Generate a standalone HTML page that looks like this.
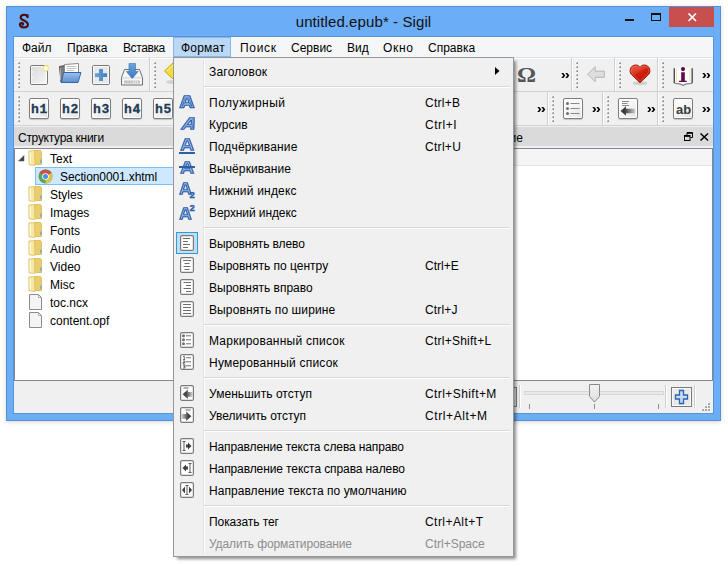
<!DOCTYPE html>
<html><head><meta charset="utf-8">
<style>
*{box-sizing:border-box;margin:0;padding:0}
html,body{width:728px;height:566px;overflow:hidden;background:#fff;font-family:"Liberation Sans",sans-serif;font-size:12px;color:#000}
.a{position:absolute}
svg{position:absolute;overflow:visible}
#win{left:6px;top:6px;width:715px;height:415px;background:#6badf6;border:1px solid #5590d6;box-shadow:0 1px 5px rgba(0,0,0,0.16)}
#title{left:0;width:727px;text-align:center;font-size:15px;line-height:15px;top:14px;color:#111;letter-spacing:0.1px}
#client{left:14px;top:37px;width:699px;height:376px;background:#f0f0f0}
#menubar{left:14px;top:37px;width:699px;height:21px;background:#f5f6f7;border-top:1px solid #fbfbfb;border-bottom:1px solid #e0e0e0}
.mi{top:38px;height:20px;line-height:20px;font-size:12px}
#fmt{left:173px;top:37px;width:58px;height:20px;background:#bcd8f7;border:1px solid #84b8ec}
.dot{width:2px;height:2px;background:linear-gradient(135deg,#cdcdcd 40%,#8a8a8a 60%);box-shadow:-1px -1px 0 rgba(255,255,255,0.6)}
.vs{width:2px;border-left:1px solid #cdcdcd;border-right:1px solid #fff}
.hl{height:1px;background:#d2d2d2}
.doc{border:1px solid #7d7d7d;border-radius:2px;background:linear-gradient(135deg,#fff 0%,#f4f4f4 50%,#e4e4e4 100%);box-shadow:inset 0 0 0 1px #fff,0 1px 1px rgba(0,0,0,0.18)}
.hb{font-family:"Liberation Mono",monospace;font-weight:bold;font-size:13px;color:#1f3b55;text-align:left;line-height:18px;letter-spacing:0.6px;padding-left:2px;-webkit-text-stroke:0.3px #1f3b55}
.chev{font-weight:bold;font-size:13px;line-height:13px;letter-spacing:-1px}
.dhdr{background:#dadada;border-top:1px solid #c9c9c9;border-bottom:1px solid #c9c9c9}
.tr{left:50px;font-size:12px;line-height:14px}
.fold{width:13px;height:15px}
#menu{left:173px;top:57px;width:341px;height:500px;background:#f0f0f0;border:1px solid #979797;box-shadow:3px 3px 3px -1px rgba(0,0,0,0.45)}
#gutter{left:203px;top:60px;width:1px;height:494px;background:#e2e2e2;border-right:1px solid #fff;width:2px}
.it{left:209px;font-size:12px;line-height:14px;height:14px}
.sc{left:425px;font-size:12px;line-height:14px;height:14px}
.sep{left:204px;width:306px;height:2px;border-top:1px solid #d7d7d7;border-bottom:1px solid #fff}
.dis{color:#8d8d8d}
</style></head><body>
<div id="win" class="a"></div>
<!-- Sigil logo -->
<svg style="left:19px;top:13px" width="11" height="16"><path d="M8.6 4.2 C8.4 2.3 7 1.7 5.2 1.7 C2.9 1.7 1.7 3 1.7 4.4 C1.7 6.5 4.4 7.2 6.1 8.1 C7.8 9 8.9 9.9 8.9 11.5 C8.9 13.4 7 14.4 4.8 14.4 C2.4 14.4 0.9 13.2 0.9 11.7 C0.9 10.3 2.1 9.8 3.2 10 C4.2 10.2 4.5 11.3 3.5 11.7" fill="none" stroke="#4e0b0d" stroke-width="2.1" stroke-linecap="round"/><path d="M7 1.8 L9.7 1.2 L9.1 5 Z" fill="#4e0b0d"/></svg>
<div id="title" class="a">untitled.epub* - Sigil</div>
<!-- window buttons -->
<div class="a" style="left:625px;top:19px;width:9px;height:2px;background:#111"></div>
<div class="a" style="left:651px;top:13px;width:10px;height:8px;border:1px solid #111;border-top-width:2px"></div>
<div class="a" style="left:669px;top:7px;width:45px;height:20px;background:#c7504f"></div>
<svg style="left:669px;top:7px" width="45" height="20"><path d="M19.5 6.5 L27 14 M27 6.5 L19.5 14" stroke="#fff" stroke-width="1.7"/></svg>

<div class="a" style="left:13px;top:36px;width:701px;height:378px;border:1px solid #5a93d6"></div>
<div id="client" class="a"></div>
<div id="menubar" class="a"></div>
<div id="fmt" class="a"></div>
<div class="a mi" style="left:22px">Файл</div>
<div class="a mi" style="left:67px">Правка</div>
<div class="a mi" style="left:123px;letter-spacing:-0.4px">Вставка</div>
<div class="a mi" style="left:181px;letter-spacing:0.2px">Формат</div>
<div class="a mi" style="left:240px;letter-spacing:0.7px">Поиск</div>
<div class="a mi" style="left:291px">Сервис</div>
<div class="a mi" style="left:347px">Вид</div>
<div class="a mi" style="left:383px;letter-spacing:0.7px">Окно</div>
<div class="a mi" style="left:428px">Справка</div>

<!-- toolbars -->
<div class="a" style="left:14px;top:58px;width:699px;height:68px;background:#f0f0f0;border-top:1px solid #fff"></div>
<div class="a hl" style="left:14px;top:91px;width:699px"></div>
<div class="a hl" style="left:14px;top:125px;width:699px"></div>

<!-- grips row1 -->
<div class="a" id="g1"></div>
<div class="a dot" style="left:18px;top:62px"></div><div class="a dot" style="left:18px;top:66px"></div><div class="a dot" style="left:18px;top:70px"></div><div class="a dot" style="left:18px;top:74px"></div><div class="a dot" style="left:18px;top:78px"></div><div class="a dot" style="left:18px;top:82px"></div><div class="a dot" style="left:18px;top:86px"></div>
<div class="a dot" style="left:154px;top:62px"></div><div class="a dot" style="left:154px;top:66px"></div><div class="a dot" style="left:154px;top:70px"></div><div class="a dot" style="left:154px;top:74px"></div><div class="a dot" style="left:154px;top:78px"></div><div class="a dot" style="left:154px;top:82px"></div><div class="a dot" style="left:154px;top:86px"></div>
<div class="a dot" style="left:576px;top:62px"></div><div class="a dot" style="left:576px;top:66px"></div><div class="a dot" style="left:576px;top:70px"></div><div class="a dot" style="left:576px;top:74px"></div><div class="a dot" style="left:576px;top:78px"></div><div class="a dot" style="left:576px;top:82px"></div><div class="a dot" style="left:576px;top:86px"></div>
<div class="a dot" style="left:619px;top:62px"></div><div class="a dot" style="left:619px;top:66px"></div><div class="a dot" style="left:619px;top:70px"></div><div class="a dot" style="left:619px;top:74px"></div><div class="a dot" style="left:619px;top:78px"></div><div class="a dot" style="left:619px;top:82px"></div><div class="a dot" style="left:619px;top:86px"></div>
<div class="a dot" style="left:662px;top:62px"></div><div class="a dot" style="left:662px;top:66px"></div><div class="a dot" style="left:662px;top:70px"></div><div class="a dot" style="left:662px;top:74px"></div><div class="a dot" style="left:662px;top:78px"></div><div class="a dot" style="left:662px;top:82px"></div><div class="a dot" style="left:662px;top:86px"></div>
<div class="a dot" style="left:18px;top:96px"></div><div class="a dot" style="left:18px;top:100px"></div><div class="a dot" style="left:18px;top:104px"></div><div class="a dot" style="left:18px;top:108px"></div><div class="a dot" style="left:18px;top:112px"></div><div class="a dot" style="left:18px;top:116px"></div><div class="a dot" style="left:18px;top:120px"></div>
<div class="a dot" style="left:552px;top:96px"></div><div class="a dot" style="left:552px;top:100px"></div><div class="a dot" style="left:552px;top:104px"></div><div class="a dot" style="left:552px;top:108px"></div><div class="a dot" style="left:552px;top:112px"></div><div class="a dot" style="left:552px;top:116px"></div><div class="a dot" style="left:552px;top:120px"></div>
<div class="a dot" style="left:607px;top:96px"></div><div class="a dot" style="left:607px;top:100px"></div><div class="a dot" style="left:607px;top:104px"></div><div class="a dot" style="left:607px;top:108px"></div><div class="a dot" style="left:607px;top:112px"></div><div class="a dot" style="left:607px;top:116px"></div><div class="a dot" style="left:607px;top:120px"></div>
<div class="a dot" style="left:662px;top:96px"></div><div class="a dot" style="left:662px;top:100px"></div><div class="a dot" style="left:662px;top:104px"></div><div class="a dot" style="left:662px;top:108px"></div><div class="a dot" style="left:662px;top:112px"></div><div class="a dot" style="left:662px;top:116px"></div><div class="a dot" style="left:662px;top:120px"></div>
<div class="a vs" style="left:149px;top:58px;height:33px"></div>
<div class="a vs" style="left:571px;top:58px;height:33px"></div>
<div class="a vs" style="left:614px;top:58px;height:33px"></div>
<div class="a vs" style="left:657px;top:58px;height:33px"></div>
<div class="a vs" style="left:547px;top:92px;height:33px"></div>
<div class="a vs" style="left:602px;top:92px;height:33px"></div>
<div class="a vs" style="left:657px;top:92px;height:33px"></div>
<svg style="left:30px;top:65px" width="19" height="20">
<defs><linearGradient id="gdoc" x1="0" y1="0" x2="1" y2="1"><stop offset="0" stop-color="#d9d9d9"/><stop offset="1" stop-color="#f7f7f7"/></linearGradient></defs>
<rect x="0.5" y="0.5" width="17" height="19" rx="1.5" fill="url(#gdoc)" stroke="#7a7a7a"/>
<rect x="1.5" y="1.5" width="15" height="17" fill="none" stroke="#fff" stroke-opacity="0.7"/>
<circle cx="3" cy="7" r="0.8" fill="#fff"/><circle cx="3" cy="12" r="0.8" fill="#fff"/>
<circle cx="15.8" cy="3.2" r="2.6" fill="#fff" stroke="#f2e46a" stroke-width="1.4" stroke-opacity="0.85"/>
</svg>
<svg style="left:59px;top:63px" width="23" height="21">
<defs><linearGradient id="gfo" x1="0" y1="0" x2="0" y2="1"><stop offset="0" stop-color="#9cc0ea"/><stop offset="1" stop-color="#5b8fd2"/></linearGradient></defs>
<path d="M0.5 3.5 L6 2.5 L6 19 L2 19.5 Z" fill="#7a7a7a" stroke="#505050" stroke-width="1"/>
<path d="M1.5 5 L1.5 17" stroke="#a8a8a8" stroke-width="1"/>
<path d="M5.5 1.5 L19.5 0.5 L19.5 10 L5.5 10 Z" fill="#fdfdfd" stroke="#8c8c8c" stroke-width="1"/>
<path d="M7.5 3.5 H17.5 M7.5 5.5 H17.5 M7.5 7.5 H15" stroke="#b4b4b4" stroke-width="0.8"/>
<path d="M4.5 9.5 L22 9.5 L19 19.5 L2.5 19.5 Z" fill="url(#gfo)" stroke="#3567ad" stroke-width="1" stroke-linejoin="round"/>
</svg>
<svg style="left:92px;top:65px" width="19" height="20">
<rect x="0.5" y="0.5" width="17" height="19" rx="1.5" fill="#e6e8ea" stroke="#7a7a7a"/>
<rect x="1.5" y="1.5" width="15" height="17" fill="none" stroke="#f6f6f6"/>
<defs><linearGradient id="gad" x1="0" x2="1"><stop offset="0" stop-color="#6aa3d8"/><stop offset="1" stop-color="#3f80c0"/></linearGradient></defs><path d="M7 4 H11 V8.2 H15 V12 H11 V16 H7 V12 H3 V8.2 H7 Z" fill="url(#gad)"/>
</svg>
<svg style="left:121px;top:63px" width="23" height="23">
<defs><linearGradient id="gsv" x1="0" y1="0" x2="0" y2="1"><stop offset="0" stop-color="#6aa6e0"/><stop offset="1" stop-color="#3b78c2"/></linearGradient></defs>
<path d="M3.5 6.5 H18.5 L21.5 14.5 V22 H0.5 V14.5 Z" fill="#f6f6f6" stroke="#707070" stroke-width="1" stroke-linejoin="round"/>
<path d="M1 14.8 H21" stroke="#d0d0d0" stroke-width="1"/>
<rect x="3" y="17.5" width="16" height="3" fill="#c4c4c4"/>
<path d="M12.5 17.5 V20.5 M14.5 17.5 V20.5 M16.5 17.5 V20.5" stroke="#ececec" stroke-width="0.8"/>
<path d="M8 0.5 H14.5 V8.5 H17.2 L11.25 15.5 L5.3 8.5 H8 Z" fill="url(#gsv)" stroke="#3a70b0" stroke-width="0.6"/>
</svg>
<svg style="left:164px;top:63px" width="16" height="18">
<ellipse cx="9" cy="19" rx="7" ry="2" fill="#000" opacity="0.12"/>
<path d="M0.5 8 L9 0 L17 8 L9 16 Z" fill="#f4dc3a" stroke="#c9a800" stroke-width="1"/>
<path d="M3 8 L9 2.5 L15 8" fill="none" stroke="#fbef9a" stroke-width="1"/>
</svg>
<div class="a" style="left:517px;top:65px;font-family:'Liberation Serif',serif;font-weight:bold;font-size:22px;line-height:20px;color:#555;transform:scaleX(1.08);transform-origin:0 0">&#937;</div>
<svg style="left:561px;top:73px" width="9" height="6"><path d="M0.3 0 H2.3 L4.3 2.5 L2.3 5 H0.3 L2.3 2.5 Z M4.3 0 H6.3 L8.3 2.5 L6.3 5 H4.3 L6.3 2.5 Z" fill="#000"/></svg>
<svg style="left:702px;top:73px" width="9" height="6"><path d="M0.3 0 H2.3 L4.3 2.5 L2.3 5 H0.3 L2.3 2.5 Z M4.3 0 H6.3 L8.3 2.5 L6.3 5 H4.3 L6.3 2.5 Z" fill="#000"/></svg>
<svg style="left:537px;top:107px" width="9" height="6"><path d="M0.3 0 H2.3 L4.3 2.5 L2.3 5 H0.3 L2.3 2.5 Z M4.3 0 H6.3 L8.3 2.5 L6.3 5 H4.3 L6.3 2.5 Z" fill="#000"/></svg>
<svg style="left:592px;top:107px" width="9" height="6"><path d="M0.3 0 H2.3 L4.3 2.5 L2.3 5 H0.3 L2.3 2.5 Z M4.3 0 H6.3 L8.3 2.5 L6.3 5 H4.3 L6.3 2.5 Z" fill="#000"/></svg>
<svg style="left:647px;top:107px" width="9" height="6"><path d="M0.3 0 H2.3 L4.3 2.5 L2.3 5 H0.3 L2.3 2.5 Z M4.3 0 H6.3 L8.3 2.5 L6.3 5 H4.3 L6.3 2.5 Z" fill="#000"/></svg>
<svg style="left:702px;top:107px" width="9" height="6"><path d="M0.3 0 H2.3 L4.3 2.5 L2.3 5 H0.3 L2.3 2.5 Z M4.3 0 H6.3 L8.3 2.5 L6.3 5 H4.3 L6.3 2.5 Z" fill="#000"/></svg>
<svg style="left:587px;top:66px" width="18" height="17">
<path d="M0.7 8.2 L8.2 0.7 V5.2 H17.3 V11.3 H8.2 V15.8 Z" fill="#dedede" stroke="#b5b5b5" stroke-width="1"/>
</svg>
<svg style="left:629px;top:64px" width="22" height="22">
<defs><linearGradient id="ght" x1="0" y1="0" x2="0.6" y2="1"><stop offset="0" stop-color="#e8654c"/><stop offset="0.45" stop-color="#dc3a22"/><stop offset="0.55" stop-color="#cf1e0c"/><stop offset="1" stop-color="#c41a0a"/></linearGradient></defs>
<ellipse cx="11" cy="19.2" rx="7.5" ry="2" fill="#000" opacity="0.14"/>
<path d="M11 18.8 L2.2 10.2 C1 9 0.9 6.8 1.4 5 C2.2 2.4 4.3 1 6.8 1 C8.8 1 10.2 2 11 3.4 C11.8 2 13.2 1 15.2 1 C17.7 1 19.8 2.4 20.6 5 C21.1 6.8 21 9 19.8 10.2 Z" fill="url(#ght)" stroke="#a8140a" stroke-width="1"/>
<path d="M11 17.3 L3 9.6 C2.2 8.6 2.1 6.9 2.5 5.4 C3.2 3.3 4.8 2.1 6.9 2.1 C8.6 2.1 10 3.1 11 4.8 C12 3.1 13.4 2.1 15.1 2.1 C17.2 2.1 18.8 3.3 19.5 5.4 C19.9 6.9 19.8 8.6 19 9.6 Z" fill="none" stroke="#f08a70" stroke-width="0.6" opacity="0.7"/>
</svg>
<svg style="left:673px;top:66px" width="21" height="21">
<path d="M1.5 2 L10 1.2 L19 2 V17 C15 17 12 17.5 10 19.3 C8 17.5 5 17 1.5 17 Z" fill="#fbfaf3"/>
<path d="M1.3 2.2 V17.2 M19.2 2.2 V17.2" stroke="#4d4d4d" stroke-width="1.4"/>
<path d="M1.5 17.3 C5 17.3 8 17.8 10 19.5 C12 17.8 15 17.3 19 17.3" fill="none" stroke="#8a8a8a" stroke-width="1.2"/>
<path d="M3.5 3 V16 M17 3 V16" stroke="#e6e2d0" stroke-width="1"/>
<circle cx="10" cy="3.1" r="2.1" fill="#5e0a4f"/>
<path d="M8.2 6.2 H11.8 V14.7 H13.8 V16.1 H6 V14.7 H8.2 Z" fill="#5e0a4f"/>
</svg>
<div class="a doc" style="left:29px;top:98px;width:20px;height:21px"></div>
<div class="a hb" style="left:29px;top:101px;width:20px;height:18px">h1</div>
<div class="a doc" style="left:60px;top:98px;width:20px;height:21px"></div>
<div class="a hb" style="left:60px;top:101px;width:20px;height:18px">h2</div>
<div class="a doc" style="left:91px;top:98px;width:20px;height:21px"></div>
<div class="a hb" style="left:91px;top:101px;width:20px;height:18px">h3</div>
<div class="a doc" style="left:122px;top:98px;width:20px;height:21px"></div>
<div class="a hb" style="left:122px;top:101px;width:20px;height:18px">h4</div>
<div class="a doc" style="left:153px;top:98px;width:20px;height:21px"></div>
<div class="a hb" style="left:153px;top:101px;width:20px;height:18px">h5</div>
<div class="a doc" style="left:563px;top:98px;width:20px;height:21px"></div>
<svg style="left:563px;top:98px" width="20" height="21">
<circle cx="4.5" cy="5.5" r="1.5" fill="#707070"/><circle cx="4.5" cy="10.5" r="1.5" fill="#707070"/><circle cx="4.5" cy="15.5" r="1.5" fill="#707070"/>
<path d="M7.5 5.5 H16.5 M7.5 10.5 H16.5 M7.5 15.5 H16.5" stroke="#8a8a8a" stroke-width="1"/>
</svg>
<div class="a doc" style="left:618px;top:98px;width:20px;height:21px"></div>
<svg style="left:618px;top:98px" width="20" height="21">
<defs><linearGradient id="gar" x1="0" x2="1"><stop offset="0.3" stop-color="#3c3c3c"/><stop offset="1" stop-color="#3c3c3c" stop-opacity="0.2"/></linearGradient></defs>
<path d="M4 3.5 H11 M4 5.5 H9.5 M4 7.5 H11" stroke="#8a8a8a" stroke-width="1"/>
<path d="M2.5 13 L8 8.2 V10.8 H17 V15.2 H8 V17.8 Z" fill="url(#gar)"/>
</svg>
<div class="a doc" style="left:673px;top:98px;width:20px;height:21px"></div>
<div class="a" style="left:673px;top:99px;width:20px;height:21px;font-weight:bold;font-size:13px;line-height:21px;text-align:center;color:#3a3a3a;padding-left:1px">ab</div>

<!-- dock left -->
<div class="a" style="left:14px;top:127px;width:260px;height:19px;background:#dadada"></div>
<div class="a" style="left:18px;top:131px;font-size:12px;line-height:14px;letter-spacing:-0.27px">Структура книги</div>
<div class="a" style="left:14px;top:148px;width:260px;height:233px;background:#fff;border:1px solid #828790;border-width:1px 0 1px 1px"></div>
<svg style="left:18px;top:155px" width="7" height="7"><path d="M6 0.5 L6 6 L0.5 6 Z" fill="#3c3c3c" stroke="#6a6a6a" stroke-width="0.6"/></svg>
<div class="a" style="left:35px;top:167px;width:240px;height:18px;background:#cde8ff;border:1px solid #7fbef5"></div>
<svg style="left:28px;top:150px" width="15" height="16">
<path d="M6 0.5 L12.5 0.5 L13.5 2 L13.5 14.5 L6 14.5 Z" fill="#e9cd6e" stroke="#d9b94f" stroke-width="0.8"/>
<path d="M0.8 1 L6.5 0.5 L7 15.5 L1 14.8 Z" fill="#f8e7a2" stroke="#dcc063" stroke-width="0.8"/>
<path d="M2.3 2.5 L2.5 13.5" stroke="#fffbe6" stroke-width="1.2"/>
<path d="M13 9.5 V13" stroke="#5a9fe0" stroke-width="1.2"/>
</svg>
<div class="a tr" style="top:152px">Text</div>
<svg style="left:38px;top:169px" width="15" height="15">
<circle cx="7.5" cy="7.5" r="7" fill="#5aa55c"/>
<path d="M7.5 7.5 L1.44 4 A7 7 0 0 1 13.56 4 Z" fill="#c9514e"/>
<path d="M7.5 7.5 L13.56 4 A7 7 0 0 1 7.5 14.5 Z" fill="#d9c54a"/>
<circle cx="7.5" cy="7.5" r="3.3" fill="#fff"/>
<circle cx="7.5" cy="7.5" r="2.5" fill="#4d8fe0"/>
</svg>
<div class="a tr" style="left:60px;top:170px;letter-spacing:-0.1px">Section0001.xhtml</div>
<svg style="left:28px;top:186px" width="15" height="16">
<path d="M6 0.5 L12.5 0.5 L13.5 2 L13.5 14.5 L6 14.5 Z" fill="#e9cd6e" stroke="#d9b94f" stroke-width="0.8"/>
<path d="M0.8 1 L6.5 0.5 L7 15.5 L1 14.8 Z" fill="#f8e7a2" stroke="#dcc063" stroke-width="0.8"/>
<path d="M2.3 2.5 L2.5 13.5" stroke="#fffbe6" stroke-width="1.2"/>
<path d="M13 9.5 V13" stroke="#5a9fe0" stroke-width="1.2"/>
</svg>
<div class="a tr" style="top:188px">Styles</div>
<svg style="left:28px;top:204px" width="15" height="16">
<path d="M6 0.5 L12.5 0.5 L13.5 2 L13.5 14.5 L6 14.5 Z" fill="#e9cd6e" stroke="#d9b94f" stroke-width="0.8"/>
<path d="M0.8 1 L6.5 0.5 L7 15.5 L1 14.8 Z" fill="#f8e7a2" stroke="#dcc063" stroke-width="0.8"/>
<path d="M2.3 2.5 L2.5 13.5" stroke="#fffbe6" stroke-width="1.2"/>
<path d="M13 9.5 V13" stroke="#5a9fe0" stroke-width="1.2"/>
</svg>
<div class="a tr" style="top:206px">Images</div>
<svg style="left:28px;top:222px" width="15" height="16">
<path d="M6 0.5 L12.5 0.5 L13.5 2 L13.5 14.5 L6 14.5 Z" fill="#e9cd6e" stroke="#d9b94f" stroke-width="0.8"/>
<path d="M0.8 1 L6.5 0.5 L7 15.5 L1 14.8 Z" fill="#f8e7a2" stroke="#dcc063" stroke-width="0.8"/>
<path d="M2.3 2.5 L2.5 13.5" stroke="#fffbe6" stroke-width="1.2"/>
<path d="M13 9.5 V13" stroke="#5a9fe0" stroke-width="1.2"/>
</svg>
<div class="a tr" style="top:224px">Fonts</div>
<svg style="left:28px;top:240px" width="15" height="16">
<path d="M6 0.5 L12.5 0.5 L13.5 2 L13.5 14.5 L6 14.5 Z" fill="#e9cd6e" stroke="#d9b94f" stroke-width="0.8"/>
<path d="M0.8 1 L6.5 0.5 L7 15.5 L1 14.8 Z" fill="#f8e7a2" stroke="#dcc063" stroke-width="0.8"/>
<path d="M2.3 2.5 L2.5 13.5" stroke="#fffbe6" stroke-width="1.2"/>
<path d="M13 9.5 V13" stroke="#5a9fe0" stroke-width="1.2"/>
</svg>
<div class="a tr" style="top:242px">Audio</div>
<svg style="left:28px;top:258px" width="15" height="16">
<path d="M6 0.5 L12.5 0.5 L13.5 2 L13.5 14.5 L6 14.5 Z" fill="#e9cd6e" stroke="#d9b94f" stroke-width="0.8"/>
<path d="M0.8 1 L6.5 0.5 L7 15.5 L1 14.8 Z" fill="#f8e7a2" stroke="#dcc063" stroke-width="0.8"/>
<path d="M2.3 2.5 L2.5 13.5" stroke="#fffbe6" stroke-width="1.2"/>
<path d="M13 9.5 V13" stroke="#5a9fe0" stroke-width="1.2"/>
</svg>
<div class="a tr" style="top:260px">Video</div>
<svg style="left:28px;top:276px" width="15" height="16">
<path d="M6 0.5 L12.5 0.5 L13.5 2 L13.5 14.5 L6 14.5 Z" fill="#e9cd6e" stroke="#d9b94f" stroke-width="0.8"/>
<path d="M0.8 1 L6.5 0.5 L7 15.5 L1 14.8 Z" fill="#f8e7a2" stroke="#dcc063" stroke-width="0.8"/>
<path d="M2.3 2.5 L2.5 13.5" stroke="#fffbe6" stroke-width="1.2"/>
<path d="M13 9.5 V13" stroke="#5a9fe0" stroke-width="1.2"/>
</svg>
<div class="a tr" style="top:278px">Misc</div>
<svg style="left:29px;top:294px" width="14" height="16">
<path d="M0.5 0.5 H9.5 L12.5 3.5 V15.5 H0.5 Z" fill="#f4f4f4" stroke="#8c8c8c" stroke-width="1"/>
<path d="M9.5 0.5 V3.5 H12.5" fill="none" stroke="#b0b0b0" stroke-width="1"/>
</svg>
<div class="a tr" style="top:296px">toc.ncx</div>
<svg style="left:29px;top:312px" width="14" height="16">
<path d="M0.5 0.5 H9.5 L12.5 3.5 V15.5 H0.5 Z" fill="#f4f4f4" stroke="#8c8c8c" stroke-width="1"/>
<path d="M9.5 0.5 V3.5 H12.5" fill="none" stroke="#b0b0b0" stroke-width="1"/>
</svg>
<div class="a tr" style="top:314px">content.opf</div>
<div class="a" style="left:290px;top:127px;width:423px;height:19px;background:#dadada"></div>
<div class="a" style="left:323px;width:200px;text-align:right;top:131px;font-size:12px;line-height:14px">Оглавление</div>
<svg style="left:684px;top:132px" width="9" height="9">
<path d="M3 0.5 H8.5 V5.5 H6.5 M3 0.5 V3" fill="none" stroke="#000" stroke-width="1"/>
<path d="M3 1.2 H8" stroke="#000" stroke-width="1.3"/>
<rect x="0.5" y="3.5" width="5.5" height="5" fill="none" stroke="#000" stroke-width="1"/>
<path d="M0.5 4.2 H6" stroke="#000" stroke-width="1.3"/>
</svg>
<svg style="left:700px;top:133px" width="9" height="8"><path d="M0.5 0.5 L8 7.5 M8 0.5 L0.5 7.5" stroke="#000" stroke-width="1.5"/></svg>
<div class="a" style="left:290px;top:148px;width:423px;height:233px;background:#fff;border:1px solid #828790;border-width:1px 1px 1px 1px"></div>
<div class="a" style="left:291px;top:149px;width:421px;height:17px;background:#f5f5f5;border-bottom:1px solid #e3e3e3"></div>
<div class="a" style="left:505px;top:387px;width:12px;height:20px;border:1px solid #7a7a7a;background:#e6e6e6"></div>
<div class="a vs" style="left:519px;top:385px;height:23px"></div>
<div class="a" style="left:524px;top:391px;width:140px;height:4px;background:#e7eaea;border:1px solid #d6d6d6"></div>
<div class="a" style="left:529px;top:404px;width:1px;height:5px;background:#8a8a8a"></div>
<div class="a" style="left:594px;top:404px;width:1px;height:5px;background:#8a8a8a"></div>
<div class="a" style="left:658px;top:404px;width:1px;height:5px;background:#8a8a8a"></div>
<svg style="left:589px;top:384px" width="11" height="19">
<defs><linearGradient id="gsl" x1="0" x2="0" y1="0" y2="1"><stop offset="0" stop-color="#f4f4f4"/><stop offset="1" stop-color="#dcdcdc"/></linearGradient></defs>
<path d="M0.5 0.5 H10.5 V12.5 L5.5 18 L0.5 12.5 Z" fill="url(#gsl)" stroke="#8a8a8a" stroke-width="1"/>
</svg>
<div class="a vs" style="left:665px;top:385px;height:23px"></div>
<div class="a" style="left:671px;top:387px;width:21px;height:20px;border:1px solid #7a7a7a;background:#e9e9e9;box-shadow:inset 0 0 0 1px #f8f8f8"></div>
<svg style="left:674px;top:389px" width="15" height="16">
<path d="M5.5 1.5 H9.5 V6 H13.5 V10 H9.5 V14.5 H5.5 V10 H1.5 V6 H5.5 Z" fill="#c5dcf4" stroke="#2f62b0" stroke-width="1.3"/>
</svg>
<div class="a vs" style="left:694px;top:385px;height:23px"></div>
<div class="a dot" style="left:708px;top:403px;background:#a8a8a8"></div>
<div class="a dot" style="left:705px;top:406px;background:#a8a8a8"></div>
<div class="a dot" style="left:708px;top:406px;background:#a8a8a8"></div>
<div class="a dot" style="left:702px;top:409px;background:#a8a8a8"></div>
<div class="a dot" style="left:705px;top:409px;background:#a8a8a8"></div>
<div class="a dot" style="left:708px;top:409px;background:#a8a8a8"></div>

<!-- menu -->
<div id="menu" class="a"></div>
<div id="gutter" class="a"></div>
<div class="a it" style="top:65px;letter-spacing:0.2px">Заголовок</div>
<svg style="left:495px;top:67px" width="5" height="8"><path d="M0 0 L4.5 4 L0 8Z" fill="#000"/></svg>
<div class="a sep" style="top:86px"></div>
<div class="a it" style="top:96px;letter-spacing:0.5px">Полужирный</div><div class="a sc" style="top:96px;letter-spacing:0.25px">Ctrl+B</div>
<div class="a it" style="top:118px">Курсив</div><div class="a sc" style="top:118px;letter-spacing:0.5px">Ctrl+I</div>
<div class="a it" style="top:140px;letter-spacing:0.15px">Подчёркивание</div><div class="a sc" style="top:140px;letter-spacing:0.3px">Ctrl+U</div>
<div class="a it" style="top:162px;letter-spacing:0.08px">Вычёркивание</div>
<div class="a it" style="top:184px;letter-spacing:0.2px">Нижний индекс</div>
<div class="a it" style="top:206px;letter-spacing:-0.1px">Верхний индекс</div>
<div class="a sep" style="top:227px"></div>
<div class="a it" style="top:237px;letter-spacing:-0.1px">Выровнять влево</div>
<div class="a it" style="top:259px">Выровнять по центру</div><div class="a sc" style="top:259px">Ctrl+E</div>
<div class="a it" style="top:281px">Выровнять вправо</div>
<div class="a it" style="top:303px;letter-spacing:0.12px">Выровнять по ширине</div><div class="a sc" style="top:303px;letter-spacing:0.15px">Ctrl+J</div>
<div class="a sep" style="top:324px"></div>
<div class="a it" style="top:334px;letter-spacing:0.24px">Маркированный список</div><div class="a sc" style="top:334px;letter-spacing:0.25px">Ctrl+Shift+L</div>
<div class="a it" style="top:356px;letter-spacing:0.22px">Нумерованный список</div>
<div class="a sep" style="top:377px"></div>
<div class="a it" style="top:387px;letter-spacing:0.06px">Уменьшить отступ</div><div class="a sc" style="top:387px;letter-spacing:0.42px">Ctrl+Shift+M</div>
<div class="a it" style="top:409px">Увеличить отступ</div><div class="a sc" style="top:409px;letter-spacing:0.6px">Ctrl+Alt+M</div>
<div class="a sep" style="top:430px"></div>
<div class="a it" style="top:440px;letter-spacing:-0.13px">Направление текста слева направо</div>
<div class="a it" style="top:462px;letter-spacing:-0.1px">Направление текста справа налево</div>
<div class="a it" style="top:484px;letter-spacing:0.05px">Направление текста по умолчанию</div>
<div class="a sep" style="top:505px"></div>
<div class="a it" style="top:515px;letter-spacing:-0.07px">Показать тег</div><div class="a sc" style="top:515px;letter-spacing:0.45px">Ctrl+Alt+T</div>
<div class="a it dis" style="top:537px;letter-spacing:-0.12px">Удалить форматирование</div><div class="a sc dis" style="top:537px">Ctrl+Space</div>
<svg style="left:179px;top:95px" width="18" height="18">
<defs><clipPath id="ca95"><path d="M0.5 13 L5 0.5 H11 L15.5 13 H11 L10.2 10.5 H5.8 L5 13 Z M6.6 7.5 H9.4 L8.6 4 H7.4 Z" fill-rule="evenodd" clip-rule="evenodd"/></clipPath>
<linearGradient id="ga95" x1="0" y1="0" x2="0" y2="1"><stop offset="0" stop-color="#5b90d8"/><stop offset="1" stop-color="#3166b8"/></linearGradient></defs>
<path d="M0.5 13 L5 0.5 H11 L15.5 13 H11 L10.2 10.5 H5.8 L5 13 Z M6.6 7.5 H9.4 L8.6 4 H7.4 Z" fill="url(#ga95)" fill-rule="evenodd" stroke="#2a56a0" stroke-width="0.6" stroke-linejoin="round"/>
<g clip-path="url(#ca95)"><path d="M0.5 13 L5 0.5 H11 L15.5 13 H11 L10.2 10.5 H5.8 L5 13 Z M6.6 7.5 H9.4 L8.6 4 H7.4 Z" fill="none" stroke="#9fc0ec" stroke-width="2.8" stroke-linejoin="round"/><path d="M0.5 13 L5 0.5 H11 L15.5 13 H11 L10.2 10.5 H5.8 L5 13 Z M6.6 7.5 H9.4 L8.6 4 H7.4 Z" fill="none" stroke="#2a56a0" stroke-width="1.7" stroke-linejoin="round"/></g>
</svg>
<svg style="left:180px;top:117px" width="18" height="18">
<defs><clipPath id="ca117"><path d="M0.5 12.5 L9.5 0.5 H14.5 L14 12.5 H10.5 L10.7 10 H6 L4 12.5 Z M7.8 7.5 H10.9 L11.2 3.5 Z" fill-rule="evenodd" clip-rule="evenodd"/></clipPath>
<linearGradient id="ga117" x1="0" y1="0" x2="0" y2="1"><stop offset="0" stop-color="#5b90d8"/><stop offset="1" stop-color="#3166b8"/></linearGradient></defs>
<path d="M0.5 12.5 L9.5 0.5 H14.5 L14 12.5 H10.5 L10.7 10 H6 L4 12.5 Z M7.8 7.5 H10.9 L11.2 3.5 Z" fill="url(#ga117)" fill-rule="evenodd" stroke="#2a56a0" stroke-width="0.6" stroke-linejoin="round"/>
<g clip-path="url(#ca117)"><path d="M0.5 12.5 L9.5 0.5 H14.5 L14 12.5 H10.5 L10.7 10 H6 L4 12.5 Z M7.8 7.5 H10.9 L11.2 3.5 Z" fill="none" stroke="#9fc0ec" stroke-width="2.8" stroke-linejoin="round"/><path d="M0.5 12.5 L9.5 0.5 H14.5 L14 12.5 H10.5 L10.7 10 H6 L4 12.5 Z M7.8 7.5 H10.9 L11.2 3.5 Z" fill="none" stroke="#2a56a0" stroke-width="1.7" stroke-linejoin="round"/></g>
</svg>
<svg style="left:180px;top:138px" width="18" height="18">
<defs><clipPath id="ca138"><path d="M0.5 12.5 L5 0.5 H9.5 L14 12.5 H10.8 L10 10 H4.5 L3.7 12.5 Z M5.3 7.5 H9.2 L7.6 3 H6.9 Z" fill-rule="evenodd" clip-rule="evenodd"/></clipPath>
<linearGradient id="ga138" x1="0" y1="0" x2="0" y2="1"><stop offset="0" stop-color="#5b90d8"/><stop offset="1" stop-color="#3166b8"/></linearGradient></defs>
<path d="M0.5 12.5 L5 0.5 H9.5 L14 12.5 H10.8 L10 10 H4.5 L3.7 12.5 Z M5.3 7.5 H9.2 L7.6 3 H6.9 Z" fill="url(#ga138)" fill-rule="evenodd" stroke="#2a56a0" stroke-width="0.6" stroke-linejoin="round"/>
<g clip-path="url(#ca138)"><path d="M0.5 12.5 L5 0.5 H9.5 L14 12.5 H10.8 L10 10 H4.5 L3.7 12.5 Z M5.3 7.5 H9.2 L7.6 3 H6.9 Z" fill="none" stroke="#9fc0ec" stroke-width="2.8" stroke-linejoin="round"/><path d="M0.5 12.5 L5 0.5 H9.5 L14 12.5 H10.8 L10 10 H4.5 L3.7 12.5 Z M5.3 7.5 H9.2 L7.6 3 H6.9 Z" fill="none" stroke="#2a56a0" stroke-width="1.7" stroke-linejoin="round"/></g>
<rect x="-1" y="14" width="16" height="2" fill="#2f5ea8"/></svg>
<svg style="left:180px;top:161px" width="18" height="18">
<defs><clipPath id="ca161"><path d="M0.5 12.5 L5 0.5 H9.5 L14 12.5 H10.8 L10 10 H4.5 L3.7 12.5 Z M5.3 7.5 H9.2 L7.6 3 H6.9 Z" fill-rule="evenodd" clip-rule="evenodd"/></clipPath>
<linearGradient id="ga161" x1="0" y1="0" x2="0" y2="1"><stop offset="0" stop-color="#5b90d8"/><stop offset="1" stop-color="#3166b8"/></linearGradient></defs>
<path d="M0.5 12.5 L5 0.5 H9.5 L14 12.5 H10.8 L10 10 H4.5 L3.7 12.5 Z M5.3 7.5 H9.2 L7.6 3 H6.9 Z" fill="url(#ga161)" fill-rule="evenodd" stroke="#2a56a0" stroke-width="0.6" stroke-linejoin="round"/>
<g clip-path="url(#ca161)"><path d="M0.5 12.5 L5 0.5 H9.5 L14 12.5 H10.8 L10 10 H4.5 L3.7 12.5 Z M5.3 7.5 H9.2 L7.6 3 H6.9 Z" fill="none" stroke="#9fc0ec" stroke-width="2.8" stroke-linejoin="round"/><path d="M0.5 12.5 L5 0.5 H9.5 L14 12.5 H10.8 L10 10 H4.5 L3.7 12.5 Z M5.3 7.5 H9.2 L7.6 3 H6.9 Z" fill="none" stroke="#2a56a0" stroke-width="1.7" stroke-linejoin="round"/></g>
<rect x="-1" y="5" width="16" height="2" fill="#2f5ea8"/></svg>
<svg style="left:179px;top:182px" width="18" height="18">
<defs><clipPath id="ca182"><path d="M0.5 12.5 L4.5 0.5 H8.5 L12.5 12.5 H9.6 L8.9 10 H4.1 L3.4 12.5 Z M4.8 7.5 H8.2 L6.8 3 H6.2 Z" fill-rule="evenodd" clip-rule="evenodd"/></clipPath>
<linearGradient id="ga182" x1="0" y1="0" x2="0" y2="1"><stop offset="0" stop-color="#5b90d8"/><stop offset="1" stop-color="#3166b8"/></linearGradient></defs>
<path d="M0.5 12.5 L4.5 0.5 H8.5 L12.5 12.5 H9.6 L8.9 10 H4.1 L3.4 12.5 Z M4.8 7.5 H8.2 L6.8 3 H6.2 Z" fill="url(#ga182)" fill-rule="evenodd" stroke="#2a56a0" stroke-width="0.6" stroke-linejoin="round"/>
<g clip-path="url(#ca182)"><path d="M0.5 12.5 L4.5 0.5 H8.5 L12.5 12.5 H9.6 L8.9 10 H4.1 L3.4 12.5 Z M4.8 7.5 H8.2 L6.8 3 H6.2 Z" fill="none" stroke="#9fc0ec" stroke-width="2.8" stroke-linejoin="round"/><path d="M0.5 12.5 L4.5 0.5 H8.5 L12.5 12.5 H9.6 L8.9 10 H4.1 L3.4 12.5 Z M4.8 7.5 H8.2 L6.8 3 H6.2 Z" fill="none" stroke="#2a56a0" stroke-width="1.7" stroke-linejoin="round"/></g>
<text x="10.6" y="16.2" font-family="Liberation Sans" font-weight="bold" font-size="9.5" fill="#2f5ea8" stroke="#2f5ea8" stroke-width="0.4">2</text></svg>
<svg style="left:179px;top:207px" width="18" height="18">
<defs><clipPath id="ca207"><path d="M0.5 12.5 L4.5 0.5 H8.5 L12.5 12.5 H9.6 L8.9 10 H4.1 L3.4 12.5 Z M4.8 7.5 H8.2 L6.8 3 H6.2 Z" fill-rule="evenodd" clip-rule="evenodd"/></clipPath>
<linearGradient id="ga207" x1="0" y1="0" x2="0" y2="1"><stop offset="0" stop-color="#5b90d8"/><stop offset="1" stop-color="#3166b8"/></linearGradient></defs>
<path d="M0.5 12.5 L4.5 0.5 H8.5 L12.5 12.5 H9.6 L8.9 10 H4.1 L3.4 12.5 Z M4.8 7.5 H8.2 L6.8 3 H6.2 Z" fill="url(#ga207)" fill-rule="evenodd" stroke="#2a56a0" stroke-width="0.6" stroke-linejoin="round"/>
<g clip-path="url(#ca207)"><path d="M0.5 12.5 L4.5 0.5 H8.5 L12.5 12.5 H9.6 L8.9 10 H4.1 L3.4 12.5 Z M4.8 7.5 H8.2 L6.8 3 H6.2 Z" fill="none" stroke="#9fc0ec" stroke-width="2.8" stroke-linejoin="round"/><path d="M0.5 12.5 L4.5 0.5 H8.5 L12.5 12.5 H9.6 L8.9 10 H4.1 L3.4 12.5 Z M4.8 7.5 H8.2 L6.8 3 H6.2 Z" fill="none" stroke="#2a56a0" stroke-width="1.7" stroke-linejoin="round"/></g>
<text x="10.6" y="3.6" font-family="Liberation Sans" font-weight="bold" font-size="9.5" fill="#2f5ea8" stroke="#2f5ea8" stroke-width="0.4">2</text></svg>
<div class="a" style="left:176px;top:232px;width:22px;height:22px;background:#c3dcf1;border:1px solid #26a0da"></div>
<svg style="left:180px;top:235px" width="14" height="16">
<rect x="0.6" y="0.6" width="12.8" height="14.8" rx="1.5" fill="#fff" stroke="#7a7a7a" stroke-width="1.2"/>
<path d="M3 3.5 H10 M3 6.5 H8 M3 9.5 H10 M3 12.5 H8" stroke="#6e6e6e" stroke-width="1"/></svg>
<svg style="left:180px;top:257px" width="14" height="16">
<rect x="0.6" y="0.6" width="12.8" height="14.8" rx="1.5" fill="#fff" stroke="#7a7a7a" stroke-width="1.2"/>
<path d="M3 3.5 H11 M4.5 6.5 H9.5 M3.5 9.5 H10.5 M4.5 12.5 H9.5" stroke="#6e6e6e" stroke-width="1"/></svg>
<svg style="left:180px;top:279px" width="14" height="16">
<rect x="0.6" y="0.6" width="12.8" height="14.8" rx="1.5" fill="#fff" stroke="#7a7a7a" stroke-width="1.2"/>
<path d="M3.5 3.5 H11 M6 6.5 H11 M3.5 9.5 H11 M6 12.5 H11" stroke="#6e6e6e" stroke-width="1"/></svg>
<svg style="left:180px;top:301px" width="14" height="16">
<rect x="0.6" y="0.6" width="12.8" height="14.8" rx="1.5" fill="#fff" stroke="#7a7a7a" stroke-width="1.2"/>
<path d="M3 3.5 H11 M3 6.5 H11 M3 9.5 H11 M3 12.5 H11" stroke="#6e6e6e" stroke-width="1"/></svg>
<svg style="left:180px;top:332px" width="14" height="16">
<rect x="0.6" y="0.6" width="12.8" height="14.8" rx="1.5" fill="#fff" stroke="#7a7a7a" stroke-width="1.2"/>
<circle cx="3.5" cy="3.8" r="1.5" fill="#6e6e6e"/><circle cx="3.5" cy="7.8" r="1.5" fill="#6e6e6e"/><circle cx="3.5" cy="11.8" r="1.5" fill="#6e6e6e"/><path d="M6 3.8 H11 M6 7.8 H11 M6 11.8 H11" stroke="#707070" stroke-width="1"/></svg>
<svg style="left:180px;top:354px" width="14" height="16">
<rect x="0.6" y="0.6" width="12.8" height="14.8" rx="1.5" fill="#fff" stroke="#7a7a7a" stroke-width="1.2"/>
<path d="M3 2.8 L4.3 2.2 V5.6 M3 5.6 H5.2 M3 7 H5 V8.5 H3.1 V10 H5.2 M3 11.2 H5 V14 H3 M3.6 12.6 H5" fill="none" stroke="#5a5a5a" stroke-width="0.9"/><path d="M6 3.8 H11 M6 7.8 H11 M6 11.8 H11" stroke="#707070" stroke-width="1"/></svg>
<defs></defs>
<svg style="left:180px;top:385px" width="14" height="16">
<rect x="0.6" y="0.6" width="12.8" height="14.8" rx="1.5" fill="#fff" stroke="#7a7a7a" stroke-width="1.2"/>
<defs><linearGradient id="go1" x1="0" x2="1"><stop offset="0.35" stop-color="#444"/><stop offset="1" stop-color="#444" stop-opacity="0.25"/></linearGradient></defs><path d="M3.5 3 H8.5" stroke="#6a6a6a" stroke-width="1"/><path d="M2.6 9.2 L7.9 4.6 V7.1 H12.4 V11.8 H7.9 V13.9 Z" fill="url(#go1)"/></svg>
<svg style="left:180px;top:407px" width="14" height="16">
<rect x="0.6" y="0.6" width="12.8" height="14.8" rx="1.5" fill="#fff" stroke="#7a7a7a" stroke-width="1.2"/>
<defs><linearGradient id="go2" x1="1" x2="0"><stop offset="0.35" stop-color="#444"/><stop offset="1" stop-color="#444" stop-opacity="0.25"/></linearGradient></defs><path d="M5.5 3 H10.5" stroke="#6a6a6a" stroke-width="1"/><path d="M11.4 9.2 L6.1 4.6 V7.1 H1.6 V11.8 H6.1 V13.9 Z" fill="url(#go2)"/></svg>
<svg style="left:180px;top:438px" width="14" height="16">
<rect x="0.6" y="0.6" width="12.8" height="14.8" rx="1.5" fill="#fff" stroke="#7a7a7a" stroke-width="1.2"/>
<path d="M2.5 3.5 H5.5 M4 3.5 V12.5 M2.5 12.5 H5.5" stroke="#5a5a5a" stroke-width="1"/><path d="M6 6.5 H8 V4.5 L11.5 8 L8 11.5 V9.5 H6 Z" fill="#3e3e3e"/></svg>
<svg style="left:180px;top:460px" width="14" height="16">
<rect x="0.6" y="0.6" width="12.8" height="14.8" rx="1.5" fill="#fff" stroke="#7a7a7a" stroke-width="1.2"/>
<path d="M8.5 3.5 H11.5 M10 3.5 V12.5 M8.5 12.5 H11.5" stroke="#5a5a5a" stroke-width="1"/><path d="M8 6.5 H6 V4.5 L2.5 8 L6 11.5 V9.5 H8 Z" fill="#3e3e3e"/></svg>
<svg style="left:180px;top:482px" width="14" height="16">
<rect x="0.6" y="0.6" width="12.8" height="14.8" rx="1.5" fill="#fff" stroke="#7a7a7a" stroke-width="1.2"/>
<path d="M5.5 3.5 H8.5 M7 3.5 V12.5 M5.5 12.5 H8.5" stroke="#5a5a5a" stroke-width="1"/><path d="M5 4.5 L2 8 L5 11.5 Z M9 4.5 L12 8 L9 11.5 Z" fill="#3e3e3e"/></svg>
</body></html>
